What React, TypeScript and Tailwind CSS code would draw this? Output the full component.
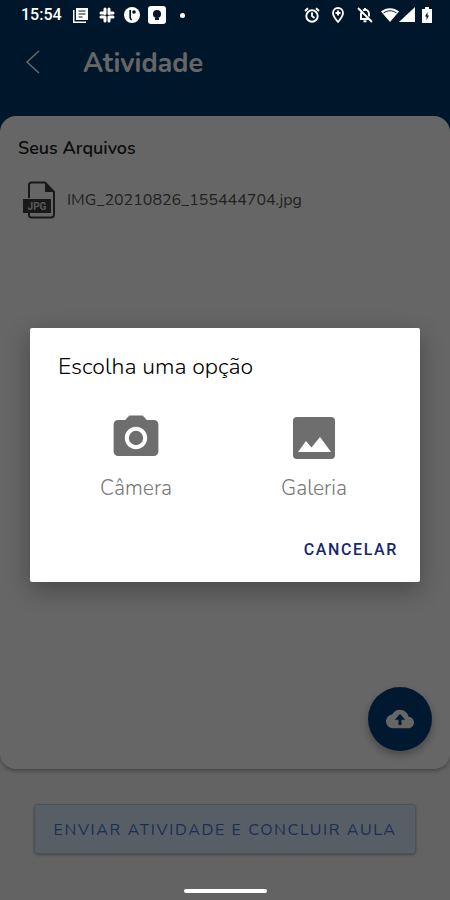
import React from "react";

function StatusBar() {
  return (
    <div className="absolute inset-x-0 top-0 z-20 flex h-[30px] items-center justify-between pl-[21px] pr-[18px] text-white">
      <div className="flex items-center">
        <span className="w-[52px] font-[Roboto,sans-serif] text-base leading-5 font-medium">15:54</span>
        <svg className="h-4 w-4" viewBox="0 0 16 16" fill="currentColor" aria-hidden="true">
          <path d="M3 1h12v12H3z" />
          <path d="M0 3h1.500v11.500H13V16H0z" />
          <path d="M5.500 4h7M5.500 7h7M5.500 10h4" stroke="#00172b" strokeWidth="1.200" />
        </svg>
        <svg className="ml-[10px] h-4 w-4" viewBox="0 0 16 16" fill="none" stroke="currentColor" strokeWidth="3" strokeLinecap="round" aria-hidden="true">
          <path d="M6 2v4.500M2 6h4M10 2v4.500M10 6h4M2 10h4M6 10v4M10 10h4M10 10v4" />
        </svg>
        <svg className="ml-[9px] h-4 w-4" viewBox="0 0 16 16" aria-hidden="true">
          <circle cx="8" cy="8" r="8" fill="currentColor" />
          <path d="M6.200 3v7.500a3 3 0 0 0 1.500 2.500" fill="none" stroke="#00172b" strokeWidth="1.700" />
          <circle cx="10" cy="5" r="1.800" fill="#00172b" />
        </svg>
        <svg className="ml-2 h-[18px] w-[18px]" viewBox="0 0 18 18" aria-hidden="true">
          <rect width="18" height="18" rx="3" fill="currentColor" />
          <circle cx="9" cy="8" r="4" fill="#00172b" />
          <path d="M7 12h4v2H7z" fill="#00172b" />
        </svg>
        <span className="ml-[14px] h-[5px] w-[5px] rounded-full bg-white" />
      </div>
      <div className="flex items-center">
        <svg className="h-4 w-4" viewBox="0 0 16 16" fill="none" stroke="currentColor" strokeWidth="1.900" aria-hidden="true">
          <circle cx="8" cy="9" r="5.700" />
          <path d="M8 5.500V9l2.500 2M1 4l3-2.700M15 4l-3-2.700" />
        </svg>
        <svg className="ml-[10px] h-4 w-4" viewBox="0 0 16 16" aria-hidden="true">
          <path d="M8 15C5 11.500 3 9 3 6a5 5 0 0 1 10 0c0 3-2 5.500-5 9z" fill="none" stroke="currentColor" strokeWidth="1.800" />
          <path d="M8 3.500v5M5.500 6h5" stroke="currentColor" strokeWidth="2" />
        </svg>
        <svg className="ml-[11px] h-4 w-4" viewBox="0 0 16 16" fill="none" stroke="currentColor" strokeWidth="1.900" aria-hidden="true">
          <path d="M1 1l14 14M4 5.500V12h8M6 3.300c3-1.500 6 .200 6 3.700v2.500M8 1v1.500M6.500 14.200h3" />
        </svg>
        <svg className="ml-2 h-4 w-[18px]" viewBox="0 0 18 16" aria-hidden="true">
          <path d="M0 4.500C5 0 13 0 18 4.500L9 15z" fill="currentColor" />
          <path d="M2.500 6c4-3 9-3 13 0" fill="none" stroke="#00172b" strokeWidth="1" />
        </svg>
        <svg className="h-4 w-4" viewBox="0 0 16 16" fill="currentColor" aria-hidden="true"><path d="M16 0v15H0z" /></svg>
        <svg className="ml-[7px] h-4 w-[10px]" viewBox="0 0 10 16" aria-hidden="true">
          <path d="M3 0h4v2h3v14H0V2h3z" fill="currentColor" />
          <path d="M5.500 5L3 9.500h1.500V13L7 8.500H5.500z" fill="#00172b" />
        </svg>
      </div>
    </div>
  );
}

function JpgFileIcon() {
  return (
    <svg className="h-[38px] w-8" viewBox="0 0 32 38" aria-hidden="true">
      <path d="M6 17V4a2.500 2.500 0 0 1 2.500-2.500H22L31 11v23a2.500 2.500 0 0 1-2.500 2.500h-20A2.500 2.500 0 0 1 6 34v-2" fill="none" stroke="#404040" strokeWidth="2" />
      <path d="M22 1v10h9z" fill="#404040" />
      <path d="M0 18h28v14H0z" fill="#404040" />
      <text x="14" y="29" textAnchor="middle" fill="#ddd" className="font-[Roboto,sans-serif] text-[10px] font-bold">JPG</text>
    </svg>
  );
}

function CameraIcon() {
  return (
    <svg className="h-14 w-14" viewBox="-0.500 -0.500 25 25" fill="#6e6e6e" aria-hidden="true">
      <circle cx="12" cy="12" r="3.200" />
      <path d="M9 2L7.170 4H4c-1.100 0-2 .900-2 2v12c0 1.100.900 2 2 2h16c1.100 0 2-.900 2-2V6c0-1.100-.900-2-2-2h-3.170L15 2H9zm3 15c-2.760 0-5-2.240-5-5s2.240-5 5-5 5 2.240 5 5-2.240 5-5 5z" />
    </svg>
  );
}

function GalleryIcon() {
  return (
    <svg className="h-14 w-14" viewBox="0 0 56 56" aria-hidden="true">
      <rect x="7" y="7" width="42" height="42" rx="4" fill="#6e6e6e" />
      <path d="M12 42l8-11 5.500 6.500L34 27l11 15z" fill="#fff" />
    </svg>
  );
}

export default function App() {
  return (
    <div className="relative flex min-h-screen flex-col bg-[#f7f8fb] font-[Nunito,Lato,sans-serif]">
      <StatusBar />
      <header className="flex h-[136px] items-start bg-[#003a6c] pt-[42px] pl-5">
        <button type="button" aria-label="Voltar" className="flex h-10 w-[63px] items-center text-white">
          <svg className="h-6 w-6" viewBox="0 0 24 24" fill="none" stroke="currentColor" strokeWidth="1.500" aria-hidden="true">
            <path d="M19 1L7 12l12 11" />
          </svg>
        </button>
        <h1 className="text-[27px] leading-[44px] font-bold text-white">Atividade</h1>
      </header>

      <main className="relative -mt-5 flex flex-1 flex-col rounded-2xl bg-white px-[18px] pt-5 shadow-[0_2px_4px_rgba(0,0,0,0.3)]">
        <h2 className="text-lg leading-6 font-semibold text-[#222]">Seus Arquivos</h2>
        <ul className="mt-[21px] pl-[5px]">
          <li className="flex items-center gap-3">
            <JpgFileIcon />
            <span className="text-base leading-6 text-[#555]">IMG_20210826_155444704.jpg</span>
          </li>
        </ul>
        <button type="button" aria-label="Enviar arquivo" className="absolute right-[18px] bottom-[18px] flex h-16 w-16 items-center justify-center rounded-full bg-[#003f78] shadow-[0_4px_8px_rgba(0,0,0,0.3)]">
          <svg className="h-7 w-7" viewBox="0 0 24 24" fill="#fff" aria-hidden="true">
            <path d="M19.350 10.040C18.670 6.590 15.640 4 12 4 9.110 4 6.600 5.640 5.350 8.040 2.340 8.360 0 10.910 0 14c0 3.310 2.690 6 6 6h13c2.760 0 5-2.240 5-5 0-2.640-2.050-4.780-4.650-4.960z" />
            <path d="M12 8l-4 4.500h3V17h2v-4.500h3z" fill="#003f78" stroke="#003f78" strokeWidth="0.500" />
          </svg>
        </button>
      </main>

      <footer className="px-[34px] pt-[35px] pb-[46px]">
        <button type="button" className="h-[50px] w-full rounded border border-[#b8cfe8] bg-[#dcecff] pt-[2px] text-base leading-6 tracking-widest whitespace-nowrap text-[#4475d0] shadow-[0_1px_3px_rgba(0,0,0,0.3)]">
          ENVIAR ATIVIDADE E CONCLUIR AULA
        </button>
      </footer>

      <div className="absolute inset-0 z-10 flex items-center justify-center bg-black/60 px-[30px] pt-[10px]">
        <div role="dialog" aria-modal="true" aria-labelledby="dialog-title" className="w-full rounded-xs bg-white pt-6 pb-[14px] shadow-[0_8px_24px_rgba(0,0,0,0.3)]">
          <h2 id="dialog-title" className="px-7 text-[23px] leading-[30px] font-light text-black">Escolha uma opção</h2>
          <div className="mt-7 flex justify-between px-[18px] text-[#777]">
            <button type="button" className="flex w-44 flex-col items-center gap-2 text-[21px] leading-7 font-light">
              <CameraIcon />
              Câmera
            </button>
            <button type="button" className="flex w-44 flex-col items-center gap-2 text-[21px] leading-7 font-light">
              <GalleryIcon />
              Galeria
            </button>
          </div>
          <div className="mt-[30px] flex justify-end pr-[22px]">
            <button type="button" className="h-9 font-[Roboto,sans-serif] text-base leading-6 font-medium tracking-widest text-[#17286a]">CANCELAR</button>
          </div>
        </div>
      </div>
      <div className="absolute inset-x-0 bottom-[7px] z-20 mx-auto h-1 w-[83px] rounded-full bg-white" />
    </div>
  );
}
